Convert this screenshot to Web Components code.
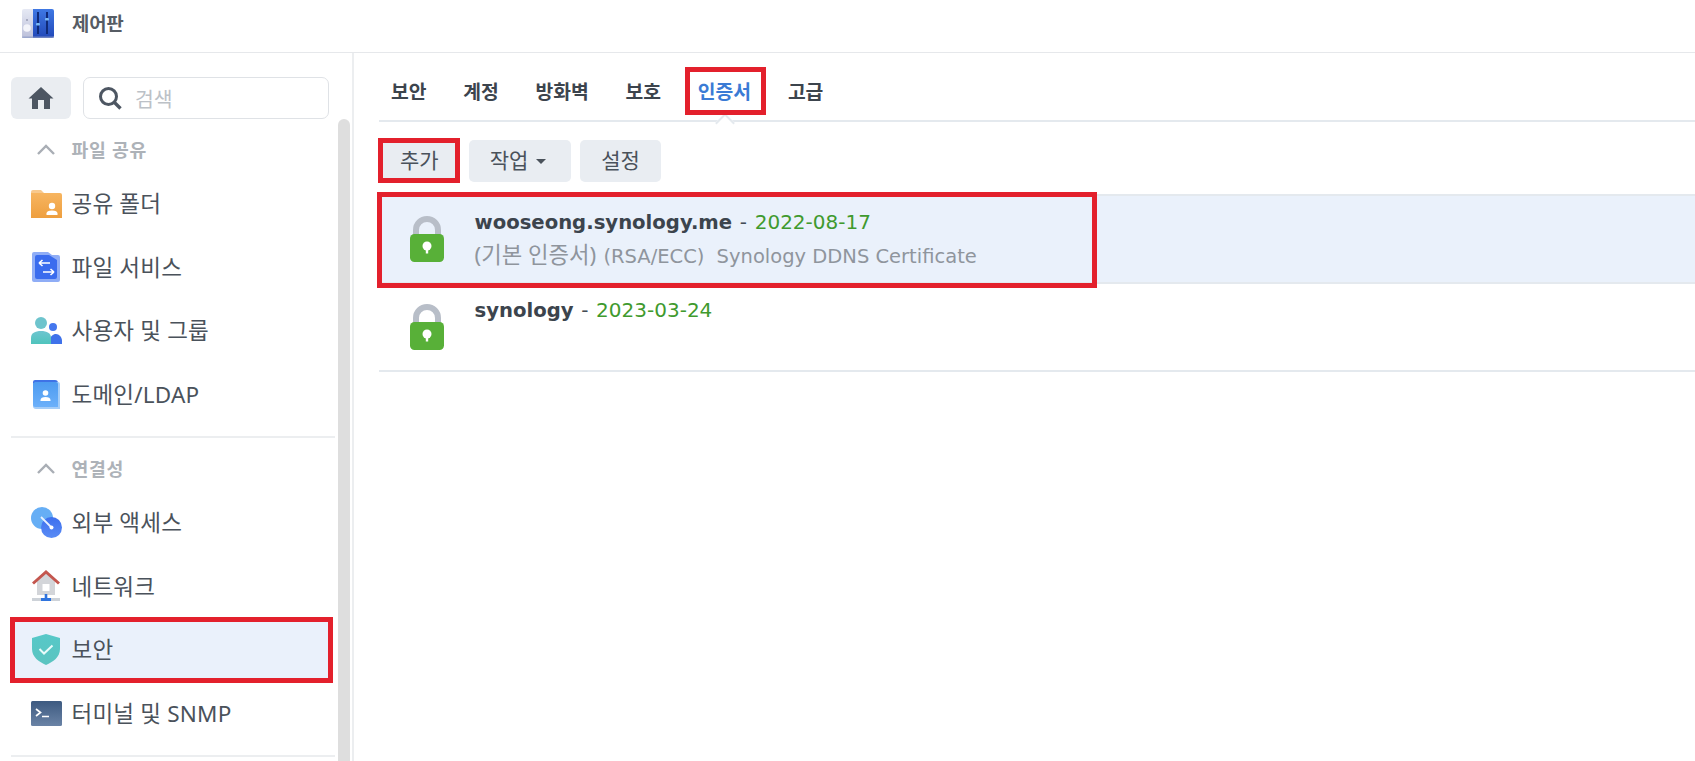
<!DOCTYPE html>
<html lang="ko">
<head>
<meta charset="utf-8">
<title>제어판</title>
<style>
  html, body { margin: 0; height: 100%; overflow: hidden; background: #fff; }
  body { font-family: "Noto Sans", "Noto Sans CJK KR", sans-serif; color: #414b55; }
</style>
</head>
<body>

<svg width="0" height="0" style="position:absolute">
  <defs>
    <linearGradient id="g-logo-l" x1="0" y1="0" x2="0" y2="1"><stop offset="0" stop-color="#e6e9f4"/><stop offset="1" stop-color="#bcc0da"/></linearGradient>
    <linearGradient id="g-logo-r" x1="0" y1="0" x2="0" y2="1"><stop offset="0" stop-color="#3f78e4"/><stop offset="1" stop-color="#2148b8"/></linearGradient>
    <linearGradient id="g-folder" x1="0" y1="0" x2="0" y2="1"><stop offset="0" stop-color="#f7b560"/><stop offset="1" stop-color="#ee9f3f"/></linearGradient>
    <linearGradient id="g-person" x1="0" y1="0" x2="0" y2="1"><stop offset="0" stop-color="#6ec5d0"/><stop offset="1" stop-color="#4fc4bc"/></linearGradient>
    <linearGradient id="g-domain" x1="0" y1="0" x2="0" y2="1"><stop offset="0" stop-color="#4d9bf0"/><stop offset="1" stop-color="#6cb0fa"/></linearGradient>
    <linearGradient id="g-ext" x1="0" y1="0" x2="0" y2="1"><stop offset="0" stop-color="#3d6fee"/><stop offset="1" stop-color="#5a8cf5"/></linearGradient>
    <linearGradient id="g-shield" x1="0" y1="0" x2="0" y2="1"><stop offset="0" stop-color="#56c8c8"/><stop offset="1" stop-color="#5bc4c0"/></linearGradient>
    <linearGradient id="g-term" x1="0" y1="0" x2="0" y2="1"><stop offset="0" stop-color="#3d5a80"/><stop offset="1" stop-color="#6a83a6"/></linearGradient>
  </defs>
</svg>

<app-window>
  <app-header slot="header" title="제어판">
    <svg slot="icon" width="33" height="30" viewBox="0 0 33 30">
      <path d="M3 0h10v29H3a2 2 0 0 1-2-2V2a2 2 0 0 1 2-2z" fill="url(#g-logo-l)"/>
      <path d="M12 0h19a2 2 0 0 1 2 2v25a2 2 0 0 1-2 2H12z" fill="url(#g-logo-r)"/>
      <rect x="1" y="27.500" width="32" height="1.500" fill="#8f9cc8" opacity=".7"/>
      <circle cx="6" cy="19" r="3.800" fill="#f3f4fa"/>
      <circle cx="6" cy="11" r=".8" fill="#6d7390"/>
      <path d="M17 3v22M26 3v22" stroke="#0f2a78" stroke-width="2"/>
      <rect x="15" y="14" width="4" height="2.400" rx="1" fill="#7ab8f4"/>
      <rect x="24" y="9" width="4" height="2.400" rx="1" fill="#7ab8f4"/>
    </svg>
  </app-header>

  <side-nav slot="side">
    <nav-group label="파일 공유">
      <nav-item label="공유 폴더">
        <svg slot="icon" width="31" height="28" viewBox="0 0 31 28"><path d="M0 2a2 2 0 0 1 2-2h8l4 4h-14z" fill="#f8c98d"/><path d="M0 3h29a2 2 0 0 1 2 2v23H0z" fill="url(#g-folder)"/><circle cx="21" cy="16" r="3.200" fill="#fff"/><path d="M15.500 25v-1.500c0-2 2-3 5.500-3s5.500 1 5.500 3V25z" fill="#fff"/></svg>
      </nav-item>
      <nav-item label="파일 서비스">
        <svg slot="icon" width="28" height="30" viewBox="0 0 28 30"><path d="M0 2a2 2 0 0 1 2-2h14l4 3h6a2 2 0 0 1 2 2v23a2 2 0 0 1-2 2H2a2 2 0 0 1-2-2z" fill="#8fadf6"/><path d="M3 5a2 2 0 0 1 2-2h12l8 5v17a2 2 0 0 1-2 2H5a2 2 0 0 1-2-2z" fill="#3a6cee"/><path d="M7 11h11M7 11l3.500-3M7 11l3.500 3M22 20H11M22 20l-3.500-3M22 20l-3.500 3" stroke="#fff" stroke-width="1.600" fill="none"/></svg>
      </nav-item>
      <nav-item label="사용자 및 그룹">
        <svg slot="icon" width="31" height="27" viewBox="0 0 31 27"><path d="M20 27h11v-3c0-4-3-7-6-7s-6 2-6 7z" fill="#3f72ea"/><circle cx="22" cy="10" r="4" fill="#4477ee"/><circle cx="10" cy="6" r="6" fill="#6ec4cd"/><path d="M0 27v-6c0-5 4-7 10-7s10 2 10 7v6z" fill="url(#g-person)"/></svg>
      </nav-item>
      <nav-item label="도메인/LDAP">
        <svg slot="icon" width="27" height="29" viewBox="0 0 27 29"><path d="M2 0h20a3 3 0 0 1 3 3v2H0V2a2 2 0 0 1 2-2z" fill="#3f72e6"/><path d="M3 2h22a2 2 0 0 1 2 2v25H3a3 3 0 0 1-3-3V4z" fill="#a5cdf8"/><path d="M2 2h21a2 2 0 0 1 2 2v23H2a2 2 0 0 1-2-2V4z" fill="url(#g-domain)"/><circle cx="12.500" cy="13" r="2.800" fill="#fff"/><path d="M7.500 21v-1c0-2 2-3 5-3s5 1 5 3v1z" fill="#fff"/></svg>
      </nav-item>
    </nav-group>
    <nav-divider></nav-divider>
    <nav-group label="연결성">
      <nav-item label="외부 액세스">
        <svg slot="icon" width="31" height="31" viewBox="0 0 31 31"><circle cx="11" cy="11" r="11" fill="#66aef5"/><circle cx="20.500" cy="20.500" r="10.500" fill="url(#g-ext)"/><path d="M10 10l10.500 10.500" stroke="#e8f0ff" stroke-width="1.800"/><circle cx="20.500" cy="20.500" r="2" fill="#fff"/></svg>
      </nav-item>
      <nav-item label="네트워크">
        <svg slot="icon" width="28" height="32" viewBox="0 0 28 32"><path d="M5 11L14 3l9 8v14H5z" fill="#d3d5d9"/><path d="M1 13.500L14 2l13 11.500" fill="none" stroke="#c4564e" stroke-width="3"/><rect x="10.500" y="14" width="7" height="7" fill="#fff"/><rect x="0" y="28" width="28" height="3" fill="#cdd2d8"/><rect x="9" y="28" width="10" height="3" fill="#2f74de"/><rect x="12.700" y="24" width="2.600" height="5" fill="#2f74de"/></svg>
      </nav-item>
      <nav-item label="보안" marked>
        <svg slot="icon" width="28" height="31" viewBox="0 0 28 31"><path d="M14 0l14 4v11c0 8-7 13-14 16C7 28 0 23 0 15V4z" fill="url(#g-shield)"/><path d="M7.500 15l4.500 4.500 8.500-8" stroke="#e9fbfa" stroke-width="2" fill="none"/></svg>
      </nav-item>
      <nav-item label="터미널 및 SNMP">
        <svg slot="icon" width="31" height="25" viewBox="0 0 31 25"><rect width="31" height="25" rx="1.500" fill="url(#g-term)"/><path d="M5 8l4.500 3.500L5 15M11 15.500h7" stroke="#fff" stroke-width="1.700" fill="none"/></svg>
      </nav-item>
    </nav-group>
    <nav-divider></nav-divider>
  </side-nav>

  <cert-panel slot="main">
    <tab-bar slot="tabs">
      <tab-item>보안</tab-item>
      <tab-item>계정</tab-item>
      <tab-item>방화벽</tab-item>
      <tab-item>보호</tab-item>
      <tab-item active>인증서</tab-item>
      <tab-item>고급</tab-item>
    </tab-bar>
    <tool-button slot="tools" marked>추가</tool-button>
    <tool-button slot="tools" caret>작업</tool-button>
    <tool-button slot="tools">설정</tool-button>
    <cert-row slot="rows" selected name="wooseong.synology.me" date="2022-08-17" tag="(기본 인증서)" algo="(RSA/ECC)" detail="Synology DDNS Certificate"></cert-row>
    <cert-row slot="rows" name="synology" date="2023-03-24"></cert-row>
  </cert-panel>
</app-window>

<script>
const KO = '"Noto Sans", "Noto Sans CJK KR", sans-serif';

// base class: every element just stamps its markup into an open shadow root
class Base extends HTMLElement {
  connectedCallback () {
    if (this.shadowRoot) return;
    this.attachShadow({ mode: "open" }).innerHTML = this.markup();
  }
}

class AppWindow extends Base {
  markup () {
    return `<style>
      :host { display: grid; grid-template-columns: 354px 1fr; grid-template-rows: 53px 1fr; height: 761px; overflow: hidden; }
      .top { grid-column: 1 / 3; border-bottom: 1px solid #e6e8eb; }
      .side { border-right: 2px solid #eceef0; position: relative; overflow: hidden; }
      .main { overflow: hidden; }
    </style>
    <div class="top"><slot name="header"></slot></div>
    <div class="side"><slot name="side"></slot></div>
    <div class="main"><slot name="main"></slot></div>`;
  }
}

class AppHeader extends Base {
  markup () {
    return `<style>
      :host { display: flex; align-items: center; height: 47px; padding-left: 21px; gap: 18px; font: 700 18.800px ${KO}; color: #565c64; }
      span { margin-top: -2px; }
      ::slotted(svg) { display: block; }
    </style>
    <slot name="icon"></slot><span>${this.getAttribute("title")}</span>`;
  }
}

class SideNav extends Base {
  markup () {
    return `<style>
      :host { display: block; padding: 24px 0 0 11px; width: 321px; }
      .search { display: flex; gap: 12px; height: 42px; margin: 0 3px 7px 0; }
      .home { width: 60px; background: #eaedf1; border-radius: 6px; display: flex; align-items: center; justify-content: center; }
      .box { flex: 1; border: 1px solid #dfe2e6; border-radius: 7px; display: flex; align-items: center; padding-left: 15px; gap: 13px; font: 400 20.500px ${KO}; color: #bcc1c7; box-sizing: border-box; }
      .bar { position: absolute; left: 338px; top: 66px; width: 12px; height: 700px; background: #dedede; border-radius: 6px; }
    </style>
    <div class="search">
      <div class="home"><svg width="26" height="24" viewBox="0 0 26 24"><path d="M13 1L0.500 12.500H4V23h18V12.500h3.500z" fill="#4d5662"/><rect x="10" y="14" width="6" height="9" fill="#eaedf1"/></svg></div>
      <div class="box"><svg width="23" height="23" viewBox="0 0 23 23"><circle cx="9.500" cy="9.500" r="8" fill="none" stroke="#4d5662" stroke-width="3"/><path d="M15 15l6.500 6.500" stroke="#4d5662" stroke-width="3.400"/></svg><span>검색</span></div>
    </div>
    <slot></slot>
    <div class="bar"></div>`;
  }
}

class NavGroup extends Base {
  markup () {
    return `<style>
      :host { display: block; }
      .head { height: 46px; display: flex; align-items: center; padding-left: 26px; gap: 16.500px; font: 700 18.300px ${KO}; color: #adb2b8; letter-spacing: .7px; }
      span { margin-top: -1px; }
      svg { display: block; }
    </style>
    <div class="head"><svg width="18" height="11" viewBox="0 0 18 11"><path d="M1 10l8-8 8 8" fill="none" stroke="#a9aeb5" stroke-width="2.400"/></svg><span>${this.getAttribute("label")}</span></div>
    <slot></slot>`;
  }
}

class NavItem extends Base {
  markup () {
    const mark = this.hasAttribute("marked");
    return `<style>
      :host { display: flex; position: relative; align-items: center; height: 63.5px; font: 400 22.500px ${KO}; letter-spacing: .2px; color: #4a525b; ${mark ? "background: #eaf1fb;" : ""} }
      .icon { width: 52px; padding-left: 9px; display: flex; justify-content: center; }
      span { margin: -2px 0 0 -.5px; }
      .mark { position: absolute; left: -1px; top: -1px; right: -1px; bottom: -1px; border: 5px solid #e3202c; }
      ::slotted(svg) { display: block; }
    </style>
    <div class="icon"><slot name="icon"></slot></div>
    <span>${this.getAttribute("label")}</span>
    ${mark ? '<div class="mark"></div>' : ""}`;
  }
}

class NavDivider extends Base {
  markup () {
    return `<style>:host { display: block; height: 2px; background: #eceef0; margin: 10px -3px 7px 0; }</style>`;
  }
}

class CertPanel extends Base {
  markup () {
    return `<style>
      :host { display: block; padding-left: 25px; }
      .tools { display: flex; gap: 9px; padding: 18px 0 12px 0; height: 42px; }
      .rows { border-top: 2px solid #e4e9ee; }
    </style>
    <slot name="tabs"></slot>
    <div class="tools"><slot name="tools"></slot></div>
    <div class="rows"><slot name="rows"></slot></div>`;
  }
}

class TabBar extends Base {
  markup () {
    return `<style>
      :host { display: flex; gap: 36.800px; height: 69px; padding-left: 12px; box-sizing: border-box; border-bottom: 2px solid #e4e9ee; align-items: flex-start; }
    </style><slot></slot>`;
  }
}

class TabItem extends Base {
  markup () {
    const active = this.hasAttribute("active");
    return `<style>
      :host { display: block; position: relative; margin-top: 24px; font: 700 19.300px ${KO}; line-height: 30px; color: ${active ? "#3a7bd5" : "#3c444d"}; }
      .mark { position: absolute; left: -13px; right: -15px; top: -10px; height: 48px; box-sizing: border-box; border: 5px solid #e3202c; }
      .notch { position: absolute; left: 50%; margin-left: -6px; top: 39px; width: 12px; height: 12px; transform: rotate(45deg); background: #fff; border-left: 2px solid #e4e9ee; border-top: 2px solid #e4e9ee; }
    </style><slot></slot>${active ? '<div class="notch"></div><div class="mark"></div>' : ""}`;
  }
}

class ToolButton extends Base {
  markup () {
    const mark = this.hasAttribute("marked");
    const caret = this.hasAttribute("caret");
    return `<style>
      :host { display: flex; position: relative; align-items: center; gap: 8px; height: 42px; box-sizing: border-box; padding: 0 21px 4px; background: #e9edf2; border-radius: 5px; font: 400 21px ${KO}; color: #4a525b; }
      .mark { position: absolute; left: -1px; right: 0; top: -2px; bottom: -1px; border: 5px solid #e3202c; }
      .caret { width: 0; height: 0; margin: 4px 4px 0 0; border: 5px solid transparent; border-top: 5px solid #4a525b; border-bottom: 0; }
    </style><slot></slot>${caret ? '<div class="caret"></div>' : ""}${mark ? '<div class="mark"></div>' : ""}`;
  }
}

class CertRow extends Base {
  markup () {
    const selected = this.hasAttribute("selected");
    const detail = this.getAttribute("detail");
    return `<style>
      :host { display: flex; position: relative; height: 86px; padding-left: 31px; border-bottom: 2px solid #e4e9ee; ${selected ? "background: #eaf1fb;" : ""} font-family: "DejaVu Sans", "Noto Sans CJK KR", sans-serif; }
      svg { display: block; margin-top: 20px; }
      .text { margin-left: 30.500px; padding-top: 11px; }
      .title { font-size: 20px; line-height: 30px; color: #444c55; white-space: nowrap; word-spacing: 1.300px; }
      b { color: #3c444d; font-size: 19.650px; }
      .date { color: #3f9a2e; }
      .detail { font-size: 19.500px; line-height: 30px; margin-top: 2px; color: #8f959d; white-space: nowrap; }
      .tag { font: 400 22.300px/30px ${KO}; margin-right: 1px; }
      .algo { margin-right: 6px; }
      .mark { position: absolute; left: -2px; top: -4px; width: 720px; height: 96px; box-sizing: border-box; border: 5px solid #e3202c; }
    </style>
    <svg width="34" height="46" viewBox="0 0 34 46">
      <path d="M6 22V14a11 11 0 0 1 22 0v8" fill="none" stroke="#b8bec8" stroke-width="6"/>
      <rect y="18" width="34" height="28" rx="4.500" fill="#58b038"/>
      <circle cx="17" cy="30" r="4.500" fill="#fff"/><path d="M15.800 31h2.400v6.500h-2.400z" fill="#fff"/>
    </svg>
    <div class="text">
      <div class="title"><b>${this.getAttribute("name")}</b> - <span class="date">${this.getAttribute("date")}</span></div>
      ${detail ? `<div class="detail"><span class="tag">${this.getAttribute("tag")}</span> <span class="algo">${this.getAttribute("algo")}</span> ${detail}</div>` : ""}
    </div>
    ${selected ? '<div class="mark"></div>' : ""}`;
  }
}

customElements.define("app-window", AppWindow);
customElements.define("app-header", AppHeader);
customElements.define("side-nav", SideNav);
customElements.define("nav-group", NavGroup);
customElements.define("nav-item", NavItem);
customElements.define("nav-divider", NavDivider);
customElements.define("cert-panel", CertPanel);
customElements.define("tab-bar", TabBar);
customElements.define("tab-item", TabItem);
customElements.define("tool-button", ToolButton);
customElements.define("cert-row", CertRow);
</script>
</body>
</html>
